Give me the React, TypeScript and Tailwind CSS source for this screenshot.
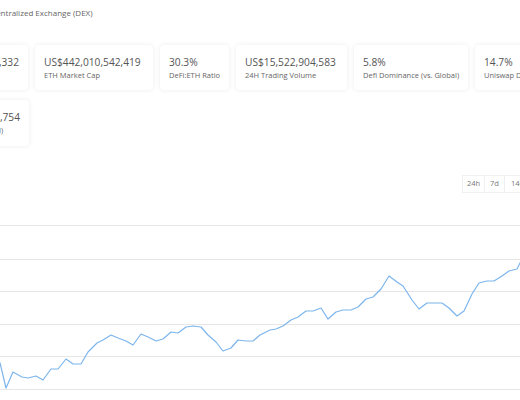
import React from "react";

const pts: [number, number][] = [
  [-4, 355], [0, 363], [6, 388], [13, 372], [22, 377], [28, 378], [36, 376], [43, 380], [51, 369], [58, 369],
  [66, 359], [73, 364], [81, 364], [88, 352], [97, 343], [103, 340], [111, 335], [118, 338], [126, 341],
  [133, 345], [141, 334], [148, 337], [156, 341], [163, 339], [171, 332], [178, 333], [186, 327], [193, 326],
  [201, 327], [208, 335], [216, 342], [223, 351], [231, 348], [238, 340], [246, 341], [253, 341], [260, 335],
  [266, 332], [270, 330], [276, 329], [283, 326], [291, 320], [298, 317], [306, 311], [313, 311], [321, 308],
  [328, 319], [336, 312], [343, 310], [351, 310], [358, 307], [366, 299], [373, 297], [381, 289], [389, 276],
  [397, 282], [403, 286], [412, 300], [419, 309], [427, 303], [434, 303], [442, 303], [449, 308], [457, 316],
  [464, 311], [472, 294], [479, 283], [487, 281], [494, 281], [502, 276], [509, 271], [517, 269], [520, 263],
  [526, 258],
];

const TOP = 193;

function Card({
  value,
  label,
  w,
  h = "h-[45px]",
  end = false,
}: {
  value: string;
  label: string;
  w: string;
  h?: string;
  end?: boolean;
}) {
  return (
    <div
      className={`${w} ${h} flex shrink-0 rounded-[4px] bg-white pt-[10px] shadow-[0_0_5px_rgba(0,0,0,0.08)] ${
        end ? "justify-end pr-[9px]" : "pl-[9px]"
      }`}
    >
      <div>
        <div className="whitespace-nowrap text-[10.2px] leading-[14px] text-[#555]">{value}</div>
        <div className="whitespace-nowrap text-[7.5px] leading-[12px] text-[#666]">{label}</div>
      </div>
    </div>
  );
}

export default function App() {
  const d = pts.map((p, i) => `${i === 0 ? "M" : "L"}${p[0]},${p[1] - TOP}`).join(" ");
  const grid = [225, 259, 291, 324, 356, 389];
  return (
    <div className="relative h-[400px] w-[520px] overflow-hidden bg-white font-['Open_Sans',sans-serif]">
      <div className="ml-[-18px] pt-[7px] text-[8px] leading-[11px] text-[#666] whitespace-nowrap">
        Decentralized Exchange (DEX)
      </div>
      <div className="ml-[-93px] mt-[27px] flex gap-[7px]">
        <Card end w="w-[121px]" value="US$133,925,874,332" label="DeFi Market Cap" />
        <Card w="w-[118px]" value="US$442,010,542,419" label="ETH Market Cap" />
        <Card w="w-[69px]" value="30.3%" label="DeFi:ETH Ratio" />
        <Card w="w-[111px]" value="US$15,522,904,583" label="24H Trading Volume" />
        <Card w="w-[114px]" value="5.8%" label="Defi Dominance (vs. Global)" />
        <Card w="w-[114px]" value="14.7%" label="Uniswap Dominance" />
      </div>
      <div className="ml-[-93px] mt-[10px] flex">
        <Card end w="w-[122px]" h="h-[46px]" value="US$133,212,591,754" label="Top Coin Volume (24H)" />
      </div>
      <div className="mt-[29px] flex pl-[462px]">
        {["24h", "7d", "14d", "30d", "90d"].map((t, i) => (
          <div
            key={t}
            className={`flex h-[18px] shrink-0 items-center justify-center border border-[#f0f0f0] text-[7.5px] text-[#777] ${
              i === 0 ? "w-[23px]" : i === 1 ? "w-[20px] border-l-0" : "w-[26px] border-l-0"
            }`}
          >
            {t}
          </div>
        ))}
      </div>
      <svg width="520" height={400 - TOP} className="block">
        {grid.map((y) => (
          <line key={y} x1="0" x2="520" y1={y - TOP + 0.5} y2={y - TOP + 0.5} stroke="#e6e6e6" strokeWidth="1" />
        ))}
        <path d={d} fill="none" stroke="#7cb5ec" strokeWidth="1.2" strokeLinejoin="round" />
      </svg>
    </div>
  );
}
